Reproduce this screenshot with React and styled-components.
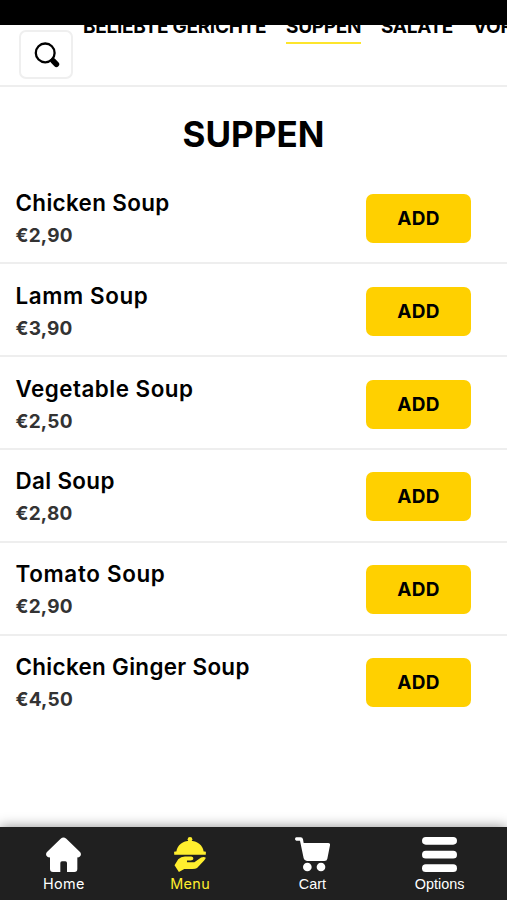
import React from 'react'
import styled, { createGlobalStyle } from 'styled-components'

const categories = [
	{ name: 'BELIEBTE GERICHTE', width: 183, spacing: -0.28 },
	{ name: 'SUPPEN', width: 75, spacing: -0.3 },
	{ name: 'SALATE', width: 72, spacing: -0.3 },
	{ name: 'VORSPEISEN', width: 120, spacing: -0.3 }
];

const dishes = [
	{ name: 'Chicken Soup', price: '€2,90', spacing: 0.35 },
	{ name: 'Lamm Soup', price: '€3,90', spacing: 0.6 },
	{ name: 'Vegetable Soup', price: '€2,50', spacing: 0.5 },
	{ name: 'Dal Soup', price: '€2,80', spacing: 0.35 },
	{ name: 'Tomato Soup', price: '€2,90', spacing: 0.68 },
	{ name: 'Chicken Ginger Soup', price: '€4,50', spacing: 0.33 }
];

const SearchIcon = () => (
	<svg width="26" height="26" viewBox="0 0 26 26" fill="none" stroke="#000">
		<circle cx="11.2" cy="10.9" r="9.4" strokeWidth="2.3" />
		<path d="M19 18.8l3.4 3.4" strokeWidth="5.6" strokeLinecap="round" />
	</svg>
)

const HomeIcon = () => (
	<svg width="35" height="35" viewBox="0 0 105 105" fill="currentColor">
		<path d="M44 5Q52-2 61 5L102 45Q107 51 103 57Q100 62 94 61V96Q94 105 85 105H63V78Q63 73 58 73H48Q43 73 43 78V105H21Q12 105 12 96V61Q5 62 2 57Q-2 51 3 45Z" />
	</svg>
)

const MenuIcon = () => (
	<svg width="32" height="35" viewBox="0 0 94 104" fill="currentColor">
		<circle cx="47" cy="7" r="7" />
		<path d="M6 45C9 23 26 11 47 11S85 23 88 45Z" />
		<rect y="43" width="94" height="10" rx="2" />
		<path d="M1 84L12 66Q20 58 32 58H51Q58 59 57 65Q56 69 49 70H38V75H60L80 61Q89 57 94 62Q93 66 89 70L68 92Q63 95 54 95H30L14 104Z" />
	</svg>
)

const CartIcon = () => (
	<svg width="35" height="35" viewBox="0 0 105 105" fill="currentColor">
		<path d="M4 1H17Q23 1 24 7L26 18H99Q106 18 105 25L97 65Q96 72 88 72H36Q28 72 26 64L15 11H4Q0 10 0 6T4 1Z" />
		<circle cx="37" cy="90" r="13" />
		<circle cx="78" cy="90" r="13" />
	</svg>
)

const OptionsIcon = () => (
	<svg width="35" height="35" viewBox="0 0 105 105" fill="currentColor">
		<rect width="105" height="23" rx="11.5" />
		<rect y="41.5" width="105" height="23" rx="11.5" />
		<rect y="82" width="105" height="23" rx="11.5" />
	</svg>
)

export default function App() {
	return (
		<Page>
			<GlobalStyle />
			<StatusBar />
			<Header>
				<SearchButton><SearchIcon /></SearchButton>
				<Categories>
					{categories.map(c => (
						<Category key={c.name} $width={c.width} $spacing={c.spacing} $active={c.name === 'SUPPEN'}>{c.name}</Category>
					))}
				</Categories>
			</Header>
			<Content>
				<Title>SUPPEN</Title>
				{dishes.map(dish => (
					<Dish key={dish.name}>
						<DishText>
							<DishName $spacing={dish.spacing}>{dish.name}</DishName>
							<Price>{dish.price}</Price>
						</DishText>
						<AddButton>ADD</AddButton>
					</Dish>
				))}
			</Content>
			<BottomNav>
				<NavItem $width={43}><HomeIcon /><NavLabel $spacing={0.4}>Home</NavLabel></NavItem>
				<NavItem $width={40} $active><MenuIcon /><NavLabel $spacing={0.4}>Menu</NavLabel></NavItem>
				<NavItem $width={35}><CartIcon /><NavLabel $plain>Cart</NavLabel></NavItem>
				<NavItem $width={50}><OptionsIcon /><NavLabel $plain>Options</NavLabel></NavItem>
			</BottomNav>
		</Page>
	)
}

const GlobalStyle = createGlobalStyle`
	* {
		box-sizing: border-box;
	}

	body {
		margin: 0;
		background: #fff;
		overflow: hidden;
	}
`;

const Page = styled.div`
	display: flex;
	flex-direction: column;
	width: 507px;
	height: 900px;
	overflow: hidden;
	background: #fff;
	color: #000;
	font-family: Inter, "Liberation Sans", sans-serif;
`;

const StatusBar = styled.div`
	flex: none;
	height: 25px;
	background: #000;
`;

const Header = styled.header`
	display: flex;
	flex: none;
	height: 62px;
	overflow: hidden;
	border-bottom: 2px solid #eee;
`;

const SearchButton = styled.button`
	display: flex;
	flex: none;
	align-items: center;
	justify-content: center;
	width: 54px;
	height: 49px;
	margin: 5px 10px 0 19px;
	padding: 0 0 0 2px;
	border: 2px solid #efefef;
	border-radius: 7px;
	background: #fff;
`;

const Categories = styled.nav`
	display: flex;
	gap: 20px;
	margin-top: -13px;
	height: 32px;
`;

const Category = styled.span`
	flex: none;
	width: ${({ $width }) => $width}px;
	height: 32px;
	border-bottom: 2px solid ${({ $active }) => $active ? '#fde52c' : 'transparent'};
	font-size: 19px;
	font-weight: 700;
	letter-spacing: ${({ $spacing }) => $spacing}px;
	line-height: 29px;
	white-space: nowrap;
`;

const Content = styled.main`
	flex: 1;
`;

const Title = styled.h1`
	margin: 0;
	padding-top: 22px;
	height: 84.7px;
	font-size: 35px;
	font-weight: 700;
	line-height: 50px;
	text-align: center;
`;

const Dish = styled.div`
	display: flex;
	align-items: center;
	justify-content: space-between;
	height: 92.8px;
	padding: 3px 36px 0 15.5px;
	border-bottom: 2px solid #eee;

	&:last-child {
		border-bottom-color: transparent;
	}
`;

const DishText = styled.div`
	padding-top: 2px;
`;

const DishName = styled.div`
	font-size: 22.4px;
	font-weight: 600;
	letter-spacing: ${({ $spacing }) => $spacing}px;
	line-height: 32px;
`;

const Price = styled.div`
	color: #333;
	font-size: 19px;
	font-weight: 700;
	letter-spacing: 0.2px;
	line-height: 33px;
`;

const AddButton = styled.button`
	width: 105px;
	height: 49px;
	padding: 0;
	border: 0;
	border-radius: 7px;
	background: #ffd000;
	color: #000;
	font-family: inherit;
	font-size: 19px;
	font-weight: 700;
	letter-spacing: 0.3px;
`;

const BottomNav = styled.footer`
	display: flex;
	flex: none;
	justify-content: space-around;
	height: 73px;
	padding: 10px 0 0;
	background: #202020;
	box-shadow: 0 0 12px rgba(0, 0, 0, 0.45);
`;

const NavItem = styled.div`
	display: flex;
	flex-direction: column;
	align-items: center;
	width: ${({ $width }) => $width}px;
	color: ${({ $active }) => $active ? '#ffee2e' : '#fff'};
`;

const NavLabel = styled.span`
	margin-top: 2px;
	font-family: ${({ $plain }) => $plain ? '"Liberation Sans", Arial, sans-serif' : 'inherit'};
	font-size: 14.4px;
	letter-spacing: ${({ $spacing = 0 }) => $spacing}px;
	line-height: 20px;
`;
